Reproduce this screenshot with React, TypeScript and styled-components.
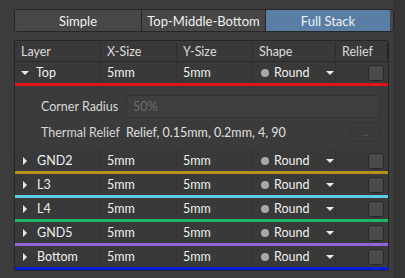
import styled, { createGlobalStyle } from 'styled-components';

const GlobalStyle = createGlobalStyle`
  html, body {
    margin: 0;
    padding: 0;
    background: #3c3c3c;
  }
  body {
    font-family: Lato, 'Open Sans', sans-serif;
    font-size: 12.5px;
    color: #e6e6e6;
  }
`;

const layers = [
  { name: 'Top', color: '#e01414', open: true },
  { name: 'GND2', color: '#b8901c', open: false },
  { name: 'L3', color: '#5ccbe8', open: false },
  { name: 'L4', color: '#1fb565', open: false },
  { name: 'GND5', color: '#9364dc', open: false },
  { name: 'Bottom', color: '#0b1ed6', open: false },
];

const Page = styled.div`
  display: flex;
  width: 405px;
  height: 278px;
  overflow: hidden;
`;
const Main = styled.div`
  flex: 1;
  padding: 9px 0 0 14px;
`;
const ScrollTrack = styled.div`
  width: 10px;
  border-left: 1px solid #2e2e2e;
  background: #363636;
`;
const Segmented = styled.div`
  display: grid;
  grid-template-columns: 126px 124px 125px;
  height: 21px;
  border: 1px solid #262626;
  border-radius: 3px;
  overflow: hidden;
  background: #474747;
`;
const SegButton = styled.div<{ active?: boolean; first?: boolean }>`
  display: flex;
  align-items: center;
  justify-content: center;
  border-left: ${(p) => (p.first ? 'none' : '1px solid #262626')};
  background: ${(p) => (p.active ? '#5a7ea5' : '#474747')};
  color: #f0f0f0;
  font-size: 13px;
`;
const Table = styled.div`
  margin-top: 8px;
  width: 373px;
  border: 1px solid #262626;
  border-radius: 2px;
  background: #393939;
`;
const Grid = styled.div`
  display: grid;
  grid-template-columns: 86px 76px 76px 83px 1fr;
  height: 20px;
  align-items: stretch;
`;
const HeaderRow = styled(Grid)`
  border-bottom: 1px solid #2a2a2a;
  color: #dcdcdc;
`;
const HeadCell = styled.div<{ last?: boolean }>`
  display: flex;
  align-items: center;
  padding-left: 6px;
  border-right: 1px solid ${(p) => (p.last ? '#202020' : '#2c2c2c')};
  margin: 2px 0;
`;
const LayerRow = styled(Grid)<{ line: string }>`
  height: 21px;
  background: #393939;
  border-bottom: 3px solid ${(p) => p.line};
`;
const Cell = styled.div<{ sep?: boolean }>`
  display: flex;
  align-items: center;
  min-width: 0;
  padding-left: 6px;
  border-right: ${(p) => (p.sep ? '1px solid #333' : 'none')};
  color: #f0f0f0;
`;
const NameCell = styled(Cell)`
  padding-left: 7px;
  gap: 8px;
`;
const Caret = styled.span<{ open?: boolean }>`
  flex-shrink: 0;
  width: 0;
  height: 0;
  ${(p) =>
    p.open
      ? `border-left: 4px solid transparent; border-right: 4px solid transparent; border-top: 4px solid #e8e8e8; margin-left: -1px; margin-right: -1px;`
      : `border-top: 4px solid transparent; border-bottom: 4px solid transparent; border-left: 4px solid #e8e8e8; margin-left: 1px; margin-right: 2px;`}
`;
const ShapeCell = styled(Cell)`
  padding-left: 8px;
  gap: 5px;
`;
const Dot = styled.span`
  flex-shrink: 0;
  width: 8px;
  height: 8px;
  border-radius: 50%;
  background: #a8a8a8;
`;
const DropArrow = styled.span`
  flex-shrink: 0;
  margin-left: 12px;
  width: 0;
  height: 0;
  border-left: 4px solid transparent;
  border-right: 4px solid transparent;
  border-top: 4px solid #e8e8e8;
`;
const ReliefCell = styled(Cell)`
  justify-content: flex-end;
  padding-right: 4px;
`;
const Check = styled.span`
  flex-shrink: 0;
  width: 14px;
  height: 14px;
  border: 1px solid #262626;
  border-radius: 3px;
  background: #4a4a4a;
`;
const Panel = styled.div`
  display: grid;
  grid-template-columns: 85px minmax(0, 1fr);
  grid-auto-rows: auto 20px;
  row-gap: 4px;
  align-items: center;
  padding: 9px 8px 8px 26px;
  background: #3b3b3b;
  color: #d8d8d8;
`;
const Label = styled.div`
  white-space: nowrap;
`;
const Field = styled.div`
  height: 21px;
  display: flex;
  align-items: center;
  padding-left: 6px;
  border: 1px solid #333;
  border-radius: 3px;
  background: #3e3e3e;
  color: #6e6e6e;
`;
const ReliefLine = styled.div`
  display: flex;
  align-items: center;
  justify-content: space-between;
  color: #e0e0e0;
`;
const DotsButton = styled.div`
  width: 28px;
  height: 18px;
  display: flex;
  align-items: center;
  justify-content: center;
  border: 1px solid #353535;
  border-radius: 3px;
  background: #3b3b3b;
  color: #666;
  font-size: 9px;
`;

export default function App() {
  return (
    <Page>
      <GlobalStyle />
      <Main>
        <Segmented>
          <SegButton first>Simple</SegButton>
          <SegButton>Top-Middle-Bottom</SegButton>
          <SegButton active>Full Stack</SegButton>
        </Segmented>
        <Table>
          <HeaderRow>
            <HeadCell>Layer</HeadCell>
            <HeadCell>X-Size</HeadCell>
            <HeadCell>Y-Size</HeadCell>
            <HeadCell>Shape</HeadCell>
            <HeadCell last>Relief</HeadCell>
          </HeaderRow>
          {layers.map((l) => (
            <div key={l.name}>
              <LayerRow line={l.color}>
                <NameCell sep>
                  <Caret open={l.open} />
                  {l.name}
                </NameCell>
                <Cell sep>5mm</Cell>
                <Cell sep>5mm</Cell>
                <ShapeCell sep>
                  <Dot />
                  Round
                  <DropArrow />
                </ShapeCell>
                <ReliefCell>
                  <Check />
                </ReliefCell>
              </LayerRow>
              {l.open && (
                <Panel>
                  <Label>Corner Radius</Label>
                  <Field>50%</Field>
                  <Label>Thermal Relief</Label>
                  <ReliefLine>
                    Relief, 0.15mm, 0.2mm, 4, 90
                    <DotsButton>...</DotsButton>
                  </ReliefLine>
                </Panel>
              )}
            </div>
          ))}
        </Table>
      </Main>
      <ScrollTrack />
    </Page>
  );
}
